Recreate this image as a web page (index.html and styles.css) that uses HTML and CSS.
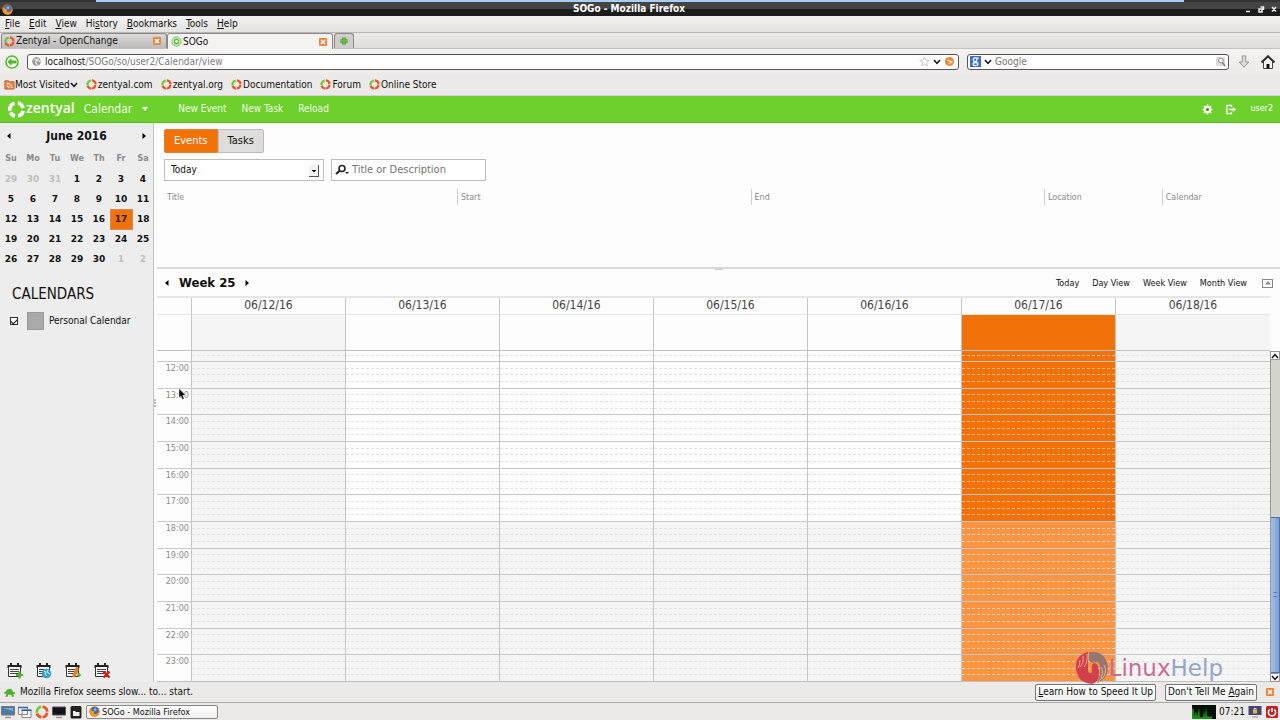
FILE: index.html
```
<!DOCTYPE html>
<html lang="en">
<head>
<meta charset="utf-8">
<title>SOGo - Mozilla Firefox</title>
<link rel="stylesheet" href="styles.css">
</head>
<body>
<svg class="defs" aria-hidden="true">
  <symbol id="ring" viewBox="0 0 12 12">
    <g fill="none" stroke-width="2.400"><path d="M1.600 6.600A4.400 4.400 0 0 1 5.200 1.700" stroke="#6fc92e"/><path d="M6.400 1.600A4.400 4.400 0 0 1 10.400 5.700M10.300 6.500A4.400 4.400 0 0 1 6.500 10.400M5.600 10.400A4.400 4.400 0 0 1 1.700 7.300" stroke="#e0592a"/></g>
  </symbol>
  <symbol id="close" viewBox="0 0 8 8">
    <rect width="8" height="8" rx="1" fill="#e8873c"/><path d="M2 2l4 4M6 2L2 6" stroke="#fff" stroke-width="1.500"/>
  </symbol>
  <symbol id="chev" viewBox="0 0 8 6"><path d="M1 1l3 3.400L7 1" fill="none" stroke="#111" stroke-width="1.500"/></symbol>
  <symbol id="firefox" viewBox="0 0 12 12">
    <circle cx="6" cy="6" r="5.600" fill="#e2641c"/><circle cx="6.400" cy="5" r="3.800" fill="#3b6fb5"/><path d="M1 3Q3 6 6 6Q4 8 7 9Q10 9 11.400 5Q12 10 7 11.600Q1 11.500 .6 6z" fill="#f09a2a"/><circle cx="6.600" cy="4" r="1.600" fill="#8db8e6"/>
  </symbol>
  <symbol id="cal" viewBox="0 0 16 16">
    <path d="M.5 2h14v3H.5z" fill="#222"/><path d="M4 0v3.500M11 0v3.500" stroke="#222" stroke-width="2"/><path d="M1.500 4v9.500h12V4" fill="#f8f8f8" stroke="#333"/><path d="M3 6.500h9M3 8.500h9M3 10.500h9" stroke="#444"/>
  </symbol>
</svg>

<header class="titlebar">
  <span class="strip"></span>
  <svg class="i11" viewBox="0 0 12 12"><use href="#firefox"/></svg>
  <h1>SOGo - Mozilla Firefox</h1>
  <svg class="winbtns" viewBox="0 0 32 8" fill="none" stroke="#eee" stroke-width="1.500"><path d="M1 6.500h4M14 4h3v3h-3zM15.500 2h3v3M27 2l4 4.500M31 2l-4 4.500"/></svg>
</header>

<nav class="menubar">
  <button><u>F</u>ile</button><button><u>E</u>dit</button><button><u>V</u>iew</button><button>Hi<u>s</u>tory</button><button><u>B</u>ookmarks</button><button><u>T</u>ools</button><button><u>H</u>elp</button>
</nav>

<div class="tabs">
  <div class="tab"><svg class="i11"><use href="#ring"/></svg><span>Zentyal - OpenChange</span><button aria-label="Close tab"><svg class="i8"><use href="#close"/></svg></button></div>
  <div class="tab active"><svg class="i11" viewBox="0 0 12 12" fill="none" stroke="#55c42c"><circle cx="6" cy="6" r="5"/><circle cx="6" cy="6" r="2.400" stroke-width="1.600"/></svg><span>SOGo</span><button aria-label="Close tab"><svg class="i8"><use href="#close"/></svg></button></div>
  <button class="newtab" aria-label="New tab"><svg class="i8" viewBox="0 0 8 8"><path d="M4 .5v7M.5 4h7" stroke="#3f9a2c" stroke-width="3.400"/><path d="M4 1v6M1 4h6" stroke="#66c244" stroke-width="1.800"/></svg></button>
</div>

<div class="navbar">
  <button class="back" aria-label="Back"><svg class="i14" viewBox="0 0 14 14"><circle cx="7" cy="7" r="6" fill="#fff" stroke="#53bd2c" stroke-width="1.600"/><path d="M2.500 7L6.500 3v2.500H11.500v3H6.500V11z" fill="#4cb828"/></svg></button>
  <div class="url" role="group" aria-label="Address">
    <svg class="i11" viewBox="0 0 12 12"><circle cx="6" cy="6" r="4.800" fill="#9b9b9b"/><path d="M3 3l3 1-1 3 2 3M8 2l-1 3 4 1" stroke="#e8e8e8" fill="none" stroke-width="1.300"/></svg>
    <span class="addr">localhost<i>/SOGo/so/user2/Calendar/view</i></span>
    <svg class="i11" viewBox="0 0 12 12"><path d="M6 1l1.400 3.500 3.800.2-3 2.400 1 3.800L6 8.800l-3.200 2.100 1-3.800-3-2.400 3.800-.2z" fill="#fff" stroke="#c5c5c5"/></svg>
    <svg class="chev"><use href="#chev"/></svg>
    <svg class="i11" viewBox="0 0 12 12"><circle cx="6" cy="6" r="5" fill="#e88a3c"/><path d="M3.600 4.500L8.400 6.500 5.500 8.500" stroke="#fbe3cc" stroke-width="1.500" fill="none"/></svg>
  </div>
  <div class="search">
    <svg class="i11" viewBox="0 0 12 12"><rect width="12" height="12" fill="#3b6fd0"/><g fill="none" stroke="#fff" stroke-width="1.400"><circle cx="5.600" cy="4" r="2"/><ellipse cx="6" cy="8.800" rx="2.600" ry="1.700"/><path d="M7 2.300h2.500M7 5.500L6 7"/></g></svg>
    <svg class="chev"><use href="#chev"/></svg>
    <input aria-label="Search" placeholder="Google">
    <svg class="i11" viewBox="0 0 12 12"><rect x="1" y="1" width="10" height="10" fill="#ddd"/><circle cx="6.500" cy="5" r="2.600" fill="#f4f4f4" stroke="#888"/><path d="M8 7l3 4" stroke="#777" stroke-width="1.500"/></svg>
  </div>
  <svg class="i14" viewBox="0 0 14 16"><path d="M5 1h4v7h3.500L7 14 1.500 8H5z" fill="#ddd" stroke="#888"/></svg>
  <svg class="i14 home" viewBox="0 0 14 14"><path d="M2.500 6v7.500h9V6L7 2z" fill="#f4f4f4" stroke="#444"/><path d="M.5 7.500L7 1.200l6.500 6.300" fill="none" stroke="#3a302c" stroke-width="2"/><path d="M5.500 9h3v4.500h-3z" fill="#111"/></svg>
</div>

<div class="bookmarks">
  <a href="#" class="mv"><svg class="i11" viewBox="0 0 12 12"><path d="M1 2h4l1 1h5v8H1z" fill="#e28a50" stroke="#bd5a22"/><path d="M3 5q4-1 6 5M3 7.500q2 0 3 2.500" stroke="#fff" fill="none"/></svg>Most Visited<svg class="chev"><use href="#chev"/></svg></a>
  <a href="#"><svg class="i11"><use href="#ring"/></svg>zentyal.com</a>
  <a href="#"><svg class="i11"><use href="#ring"/></svg>zentyal.org</a>
  <a href="#"><svg class="i11"><use href="#ring"/></svg>Documentation</a>
  <a href="#"><svg class="i11"><use href="#ring"/></svg>Forum</a>
  <a href="#"><svg class="i11"><use href="#ring"/></svg>Online Store</a>
</div>

<div class="appbar">
  <svg class="logo" viewBox="0 0 20 20" fill="none" stroke="#fff" stroke-width="3.800"><path d="M2.900 11.500A7 7 0 0 1 8 3.300M11.500 3.200A7 7 0 0 1 16.900 8.500M17 11.500A7 7 0 0 1 11.700 16.800M8.400 16.800A7 7 0 0 1 3.700 13"/></svg>
  <b>zentyal</b>
  <button class="module">Calendar<svg viewBox="0 0 8 4"><path d="M1 0h6L4 4z" fill="#fff"/></svg></button>
  <button>New Event</button><button>New Task</button><button>Reload</button>
  <span class="grow"></span>
  <button class="ico" aria-label="Preferences"><svg class="i11" viewBox="0 0 12 12"><path d="M6 .5v11M.5 6h11M2.200 2.200l7.600 7.600M9.800 2.200l-7.600 7.600" stroke="#fff" stroke-width="1.900"/><circle cx="6" cy="6" r="2.700" fill="#3d8a18" stroke="#fff" stroke-width="2"/></svg></button>
  <button class="ico" aria-label="Log off"><svg class="i11" viewBox="0 0 12 12" fill="none" stroke="#fff" stroke-width="1.600"><path d="M7 3V1.500H2v9h5V9M4.500 6H9"/><path d="M8.500 3.200L12 6l-3.500 2.800z" fill="#fff" stroke="none"/></svg></button>
  <span class="user">user2</span>
</div>

<div class="app">
  <aside>
    <div class="mhead"><button aria-label="Previous month"><svg class="arr" viewBox="0 0 4 6"><path d="M3.500 0v6L0 3z"/></svg></button><b>June 2016</b><button aria-label="Next month"><svg class="arr" viewBox="0 0 4 6"><path d="M.5 0v6L4 3z"/></svg></button></div>
    <table class="mini">
      <thead><tr><th>Su</th><th>Mo</th><th>Tu</th><th>We</th><th>Th</th><th>Fr</th><th>Sa</th></tr></thead>
      <tbody>
      <tr><td class="off">29</td><td class="off">30</td><td class="off">31</td><td>1</td><td>2</td><td>3</td><td>4</td></tr>
      <tr><td>5</td><td>6</td><td>7</td><td>8</td><td>9</td><td>10</td><td>11</td></tr>
      <tr><td>12</td><td>13</td><td>14</td><td>15</td><td>16</td><td class="now">17</td><td>18</td></tr>
      <tr><td>19</td><td>20</td><td>21</td><td>22</td><td>23</td><td>24</td><td>25</td></tr>
      <tr><td>26</td><td>27</td><td>28</td><td>29</td><td>30</td><td class="off">1</td><td class="off">2</td></tr>
      </tbody>
    </table>
    <h2>CALENDARS</h2>
    <label class="cal"><input type="checkbox" checked><span class="swatch"></span>Personal Calendar</label>
    <div class="tools">
      <button aria-label="New calendar"><svg viewBox="0 0 16 16"><use href="#cal"/><path d="M12.500 8.500v7M9 12h7" stroke="#4fb52a" stroke-width="2.200"/></svg></button>
      <button aria-label="Web calendar"><svg viewBox="0 0 16 16"><use href="#cal"/><circle cx="10.500" cy="10.500" r="4.800" fill="#3d9fd0"/><path d="M8 8l2 1-1 2 2 2M12 7l-1 2 3 2" stroke="#d6eefa" fill="none"/></svg></button>
      <button aria-label="Subscribe"><svg viewBox="0 0 16 16"><use href="#cal"/><path d="M11 4q4 0 2 5l-3 5q-4 1-2-3z" fill="#ee7a1c"/><path d="M14 10v4M12 12h4" stroke="#4fb52a" stroke-width="1.500"/></svg></button>
      <button aria-label="Remove calendar"><svg viewBox="0 0 16 16"><use href="#cal"/><path d="M9.500 8.500l6 6M15.500 8.500l-6 6" stroke="#cc2218" stroke-width="2.400"/></svg></button>
    </div>
  </aside>
  <div class="vsplit"><span></span></div>
  <main>
    <section class="events">
      <div class="seg"><button class="on">Events</button><button>Tasks</button></div>
      <div class="filters">
        <div class="pick"><select aria-label="Period"><option>Today</option></select></div>
        <div class="find"><svg viewBox="0 0 14 12" fill="none" stroke="#222"><circle cx="7" cy="4.500" r="3" stroke-width="1.600"/><path d="M5 6.500L1 10" stroke-width="2.200"/><path d="M10 8h4l-2 2z" fill="#222" stroke="none"/></svg><input aria-label="Search events" placeholder="Title or Description"></div>
      </div>
      <table class="list"><colgroup><col class="wide"><col class="wide"><col class="wide"><col><col></colgroup>
        <thead><tr><th>Title</th><th>Start</th><th>End</th><th>Location</th><th>Calendar</th></tr></thead></table>
    </section>
    <div class="hsplit"><span></span></div>
    <section class="week">
      <div class="whead">
        <button aria-label="Previous week"><svg class="arr" viewBox="0 0 4 6"><path d="M3.500 0v6L0 3z"/></svg></button><b>Week 25</b><button aria-label="Next week"><svg class="arr" viewBox="0 0 4 6"><path d="M.5 0v6L4 3z"/></svg></button>
        <span class="grow"></span>
        <a href="#">Today</a><a href="#">Day View</a><a href="#">Week View</a><a href="#">Month View</a>
        <button class="fold" aria-label="Collapse"><svg viewBox="0 0 6 4"><path d="M0 3.500L3 0l3 3.500z" fill="#888"/></svg></button>
      </div>
      <div class="row dates"><span></span><span>06/12/16</span><span>06/13/16</span><span>06/14/16</span><span>06/15/16</span><span>06/16/16</span><span>06/17/16</span><span>06/18/16</span></div>
      <div class="row allday"><span></span><span class="we"></span><span></span><span></span><span></span><span></span><span class="today"></span><span class="we"></span></div>
      <div class="scroll">
        <div class="hours" id="hours"></div>
        <div class="bar"><span class="sb"><svg class="chev"><use href="#chev"/></svg></span><span class="track"></span><span class="thumb"><i></i></span><span class="sb"><svg class="chev"><use href="#chev"/></svg></span></div>
      </div>
    </section>
  </main>
</div>

<div class="notice">
  <svg class="i11" viewBox="0 0 12 12"><path d="M0 6.500q0-1.500 2-1.500 1-3 4-3t4 3.500l2 .5v1.500H10l1 3H8.500L8 8.500H4.500L4 10.500H1.500L2.500 8z" fill="#4fb02c"/></svg>
  <span>Mozilla Firefox seems slow... to... start.</span><span class="grow"></span>
  <button><u>L</u>earn How to Speed It Up</button><button>Don't Tell Me <u>A</u>gain</button>
  <button class="x" aria-label="Dismiss"><svg class="i8"><use href="#close"/></svg></button>
</div>

<footer>
  <svg class="i14" viewBox="0 0 14 14"><path d="M.5 1.500h13v8.500H.5z" fill="#4d79a8" stroke="#777"/><path d="M2 3h10v3z" fill="#86a8cc"/><path d="M4 12.500h6" stroke="#999" stroke-width="1.500"/></svg>
  <svg class="i14" viewBox="0 0 14 14"><path d="M.5 2.500h9v7h-9zM4 5h9v7.500H4z" fill="#f4f4f4" stroke="#888"/><path d="M0 2.500h10M3.500 5.200h10" stroke="#3465a4" stroke-width="1.600"/></svg>
  <svg class="i14"><use href="#ring"/></svg>
  <svg class="i14" viewBox="0 0 14 14"><path d="M.5 2h13v8H.5z" fill="#101418" stroke="#555"/><path d="M4 12.500h6" stroke="#999" stroke-width="1.500"/></svg>
  <svg class="i14" viewBox="0 0 14 14"><rect x="1.500" y="1" width="11" height="12.500" rx="1.500" fill="#222"/><path d="M4 6h2l1 1h3.500v4H4z" fill="#eee"/></svg>
  <button class="task"><svg class="i11" viewBox="0 0 12 12"><use href="#firefox"/></svg>SOGo - Mozilla Firefox</button>
  <span class="grow"></span>
  <svg class="cpu" viewBox="0 0 24 14"><rect width="24" height="14" fill="#031003"/><path d="M0 14V2l1 3 1-1v8l2-6 1 6 2-9 1 9h3l1-7 1 7 1-10 1 9 3 1 2-1V14z" fill="#1c8a1c"/></svg>
  <time>07:21</time>
  <svg class="i14" viewBox="0 0 14 14"><rect x=".5" y="1" width="13" height="9" fill="#47476e"/><path d="M5 5h4v3.500H5z" fill="#e3b93c"/><path d="M6 5V3.500h2V5" fill="none" stroke="#ddd"/><path d="M4 12h6" stroke="#aaa" stroke-width="1.500"/></svg>
  <svg class="i14" viewBox="0 0 14 14"><rect x="1" y="1" width="12" height="12" rx="1.500" fill="#c32222"/><path d="M4.800 4.500a3.600 3.600 0 1 0 4.400 0M7 3v4" stroke="#fff" stroke-width="1.500" fill="none"/></svg>
</footer>

<div class="mark"><svg viewBox="0 0 34 34"><g opacity=".85"><path d="M13 1Q0 4 1 18 3 32 17 33q7-2 7-10 0-11-5-11-3 1-2 9-2 3-4-1z" fill="#c8324c"/><path d="M14 1v9l4 2q6-3 7 4 1 9-3 16 11-4 11-16Q31 2 19 1z" fill="#86717a"/><path d="M12 3q1 8-3 13M8 5q1 7-3 11M5 9q0 5-2 8" stroke="#f0a6a0" fill="none"/><path d="M26 16q4 6-2 15M29 14q4 7-2 14" stroke="#ddb8a0" fill="none"/></g></svg><span>Linux</span><span class="help">Help</span></div>
<svg class="cursor" viewBox="0 0 8 12"><path d="M1 .5v9l2-1.600 1.500 3.600 1.600-.8L4.600 7.300l2.700-.3z" fill="#000" stroke="#fff" stroke-width=".4"/></svg>
<script src="script.js"></script>
</body>
</html>
```
FILE: script.js
```
const hours = document.getElementById('hours');

function addRow(label, extra, evening) {
  const row = document.createElement('div');
  row.className = 'row hour' + extra;
  const time = document.createElement('span');
  time.className = 'time';
  time.textContent = label;
  row.append(time);
  for (let day = 0; day < 7; day++) {
    const cell = document.createElement('span');
    const weekend = day === 0 || day === 6;
    cell.className = 'cell' + (day === 5 ? ' today' : '') + (weekend ? ' we' : '') + (evening ? ' eve' : '');
    for (let q = 0; q < 4; q++) cell.append(document.createElement('i'));
    row.append(cell);
  }
  hours.append(row);
}

addRow('', ' partial', false);
for (let h = 12; h < 24; h++) addRow(h + ':00', '', h >= 18);
```
FILE: styles.css
```
* { box-sizing: border-box; }
body { margin: 0; min-height: 100vh; display: flex; flex-direction: column; background: #eceae9; color: #111; font: 10px/14px "DejaVu Sans Condensed", "DejaVu Sans", sans-serif; }
button, input, select { font: inherit; color: inherit; margin: 0; padding: 0; border: 0; background: none; }
a { color: inherit; text-decoration: none; }
u { text-underline-offset: 1px; }
svg { display: block; flex: none; }
.defs { position: absolute; width: 0; height: 0; }
.grow { flex: 1; }
.i8 { width: 8px; height: 8px; }
.i11 { width: 11px; height: 11px; }
.i14 { width: 14px; height: 14px; }
.chev { width: 8px; height: 6px; }
.arr { width: 4px; height: 6px; }

.titlebar { position: relative; height: 16px; display: flex; align-items: center; padding: 0 3px 0 2px; background: linear-gradient(#444 50%, #1c1c1c 50%); border-top: 2px solid #333; color: #fff; }
.strip { position: absolute; top: -2px; left: 96px; right: 96px; height: 2px; background: #a9cdf5; }
.titlebar h1 { flex: 1; margin: 0; padding-bottom: 1px; text-align: center; font-size: 10px; line-height: 12px; }
.winbtns { width: 32px; height: 8px; }

.menubar { height: 17px; display: flex; align-items: center; gap: 9px; padding-left: 5px; background: linear-gradient(#f3f2f1, #e5e3e1); border-bottom: 1px solid #b8b6b4; }
.tabs { height: 16px; display: flex; background: linear-gradient(#ebe9e7, #e0deda); border-bottom: 1px solid #c4c2c0; }
.tab { width: 166px; display: flex; align-items: center; gap: 1px; padding: 0 5px 0 2px; margin-left: 1px; background: linear-gradient(#dcdad8, #bdbbb9); border: 1px solid #8b8987; border-bottom: 0; border-radius: 3px 3px 0 0; }
.tab span { flex: 1; }
.tab.active { margin: 0 0 -1px; padding-left: 3px; background: #f4f3f2; }
.newtab { width: 20px; margin-left: 1px; display: grid; place-items: center; background: #cfcdcb; border: 1px solid #8b8987; border-bottom: 0; border-radius: 3px 3px 0 0; }

.navbar { height: 25px; display: flex; align-items: center; gap: 8px; padding: 0 5px; background: linear-gradient(#f4f3f2, #ecebe9); }
.navbar .home { margin-left: 2px; }
.url, .search { height: 16px; display: flex; align-items: center; gap: 3px; padding: 0 3px; background: #fff; border: 1px solid #5d5257; border-radius: 3px; }
.url { flex: 1; }
.addr { flex: 1; }
.addr i { font-style: normal; color: #7c7c7c; }
.search { width: 262px; padding: 0 2px; }
.search input { flex: 1; min-width: 0; }
input::placeholder { color: #757575; opacity: 1; }
.bookmarks { height: 22px; display: flex; align-items: center; gap: 8px; padding: 0 4px; border-bottom: 1px solid #d9cde0; }
.bookmarks a { display: flex; align-items: center; gap: 1px; }
.bookmarks .mv { gap: 0; }

.appbar { height: 27px; display: flex; align-items: center; padding: 0 7px; background: #6dd02c; border-bottom: 1px solid #5cb824; color: #fff; }
.appbar .logo { width: 19px; height: 19px; }
.appbar b { font: 600 14px/18px "Open Sans", "DejaVu Sans", sans-serif; padding-bottom: 2px; margin-right: 9px; }
.appbar button { margin-right: 15px; color: #f1fbe8; }
.appbar .module { display: flex; align-items: center; gap: 9px; margin-right: 29px; font-size: 12px; }
.appbar .ico { margin-right: 12px; }
.module svg { width: 8px; height: 4px; }
.user { font-size: 8px; font-family: "DejaVu Sans", sans-serif; margin-left: 2px; }

.app { flex: 1; display: flex; min-height: 0; }
aside { width: 154px; display: flex; flex-direction: column; background: #ededed; border-right: 1px solid #c4c4c4; }
.mhead { height: 25px; display: flex; align-items: center; justify-content: space-between; padding: 0 7px; font-size: 12px; }
.mini { width: 154px; table-layout: fixed; border-collapse: collapse; text-align: center; font-weight: bold; font-family: "DejaVu Sans", sans-serif; }
.mini th { height: 21px; padding: 0; font-size: 8px; color: #8a8a8a; }
.mini td { height: 20px; padding: 0; font-size: 9px; line-height: 18px; }
.mini .off { color: #bdbdbd; }
.mini .now { background: #f17208; border: 1px solid #d98a50; color: #2c2430; }
aside h2 { margin: 17px 0 0 12px; font-size: 15px; line-height: 16px; font-weight: normal; }
.cal { display: flex; align-items: center; margin: 10px 0 0 10px; }
.cal input { appearance: none; width: 8px; height: 8px; border: 1px solid #333; background: #fff; display: grid; place-items: center; }
.cal input:checked::after { content: ""; width: 5px; height: 3px; border: solid #111; border-width: 0 0 1px 1px; rotate: -45deg; }
.swatch { width: 17px; height: 18px; margin: 0 5px 0 9px; background: #aaa; border: 1px solid #999; }
.tools { margin-top: auto; display: flex; gap: 13px; padding: 0 0 3px 7px; }
.tools svg { width: 16px; height: 16px; }

.vsplit { width: 3px; display: flex; align-items: center; background: #fdfdfd; }
.vsplit span { width: 2px; height: 8px; border-left: 2px dotted #bbb; }
main { flex: 1; min-width: 0; display: flex; flex-direction: column; background: #fdfdfd; }
.events { height: 144px; padding: 6px 0 0 7px; }
.seg { display: flex; font-size: 11px; }
.seg button { height: 24px; padding: 0 9px; background: #dfddda; border: 1px solid #bcbcbc; border-radius: 0 2px 2px 0; }
.seg .on { background: #f17208; border-color: #e88030; border-radius: 2px 0 0 2px; color: #fff; }
.filters { display: flex; gap: 7px; margin-top: 6px; }
.pick, .find { position: relative; height: 22px; display: flex; align-items: center; border: 1px solid #bdbdbd; background: #fff; }
.pick { width: 160px; }
.pick select { appearance: none; flex: 1; height: 20px; padding-left: 6px; }
.pick::after { content: ""; position: absolute; right: 4px; top: 5px; width: 9px; height: 11px; border: solid #555; border-width: 0 1px 1px 0; background: linear-gradient(#111, #111) 3px 5px / 4px 1px no-repeat, linear-gradient(#111, #111) 4px 6px / 2px 1px no-repeat, #f2f2f2; pointer-events: none; }
.find { width: 155px; padding-left: 3px; gap: 3px; font-size: 11px; }
.find svg { width: 14px; height: 12px; }
.find input { flex: 1; min-width: 0; }
.list { width: 100%; margin-top: 8px; table-layout: fixed; border-collapse: collapse; color: #8a8a8a; }
.list th { height: 16px; padding: 2px 0 0 3px; border-left: 1px solid #d0d0d0; text-align: left; font: 8px/12px "DejaVu Sans", sans-serif; }
.list th:first-child { border: 0; }
.list .wide { width: 26.3%; }
.hsplit { height: 3px; border-top: 2px solid #d8d8d8; display: flex; justify-content: center; }
.hsplit span { width: 8px; height: 1px; background: #ccc; }

.week { flex: 1; display: flex; flex-direction: column; }
.whead { height: 26px; display: flex; align-items: center; gap: 10px; padding: 0 7px 0 8px; }
.whead b { font-size: 13px; }
.whead a { margin-left: 3px; font-size: 9px; }
.fold { width: 11px; height: 9px; margin-left: 5px; border: 1px solid #888; display: grid; place-items: center; }
.fold svg { width: 6px; height: 4px; }
.row { display: grid; grid-template-columns: 35px repeat(7, 1fr); }
.row > span { border-right: 1px solid #c6c6c6; }
.row > span:last-child { border-right: 0; }
.dates, .allday { margin-right: 10px; }
.dates { height: 18px; border-top: 2px solid #e6e6e6; text-align: center; font-size: 12px; line-height: 15px; color: #444; }
.allday { height: 37px; border-bottom: 1px solid #c0c0c0; }
.allday > span { border-top: 1px solid #e4e4e4; }
.we { background: #f5f5f5; }
.scroll { flex: 1; display: flex; }
.hours { flex: 1; display: flex; flex-direction: column; border-bottom: 1px solid #c0c0c0; }
.hour { flex: 1; border-bottom: 1px solid #c8c8c8; }
.hour:last-child { border-bottom: 0; }
.hour.partial { flex: 0 0 11px; }
.time { padding-right: 2px; text-align: right; color: #8c8c8c; font: 9px/13px "DejaVu Sans Condensed", sans-serif; }
.cell { display: flex; flex-direction: column; overflow: hidden; }
.cell i { flex: 1; border-bottom: 1px dashed #e2e2e2; }
.cell i:last-child { border: 0; }
.partial i { display: none; }
.partial i:first-child { display: block; flex: 0 0 5px; }
.eve { background: #f5f5f5; }
.today { background: #f17208; }
.today i { border-color: #f9b680; }
.today.eve { background: #f99545; }
.today.eve i { border-color: #fcd3ae; }
.bar { width: 10px; display: flex; flex-direction: column; border-left: 1px solid #999; background: #d4d3d0; }
.sb { height: 9px; background: #fafafa; border: 1px solid #999; border-left: 0; display: grid; place-items: center; }
.sb:first-child svg { rotate: 180deg; }
.track { flex: 157; }
.thumb { flex: 155; display: grid; place-items: center; background: linear-gradient(90deg, #a3c0ea, #7d9fd4); border: 1px solid #4a6fae; border-left: 0; }
.thumb i { width: 4px; height: 5px; border: solid #5f82b8; border-width: 1px 0; }

.notice { height: 21px; display: flex; align-items: center; gap: 5px; padding: 0 6px 0 4px; border-bottom: 1px solid #aaa; }
.notice button { height: 17px; padding: 0 2px; border: 1px solid #777; border-radius: 2px; background: linear-gradient(#fff, #f0f0f0); }
.notice button + button { margin-left: 4px; }
.notice .x { border: 0; padding: 0; background: none; height: 8px; }
footer { height: 17px; display: flex; align-items: center; gap: 3px; padding: 0 1px; }
.task { width: 132px; height: 14px; display: flex; align-items: center; gap: 2px; padding-left: 2px; border: 1px solid #888; border-radius: 2px; background: linear-gradient(#fff, #eee); font-size: 9px; }
.cpu { width: 24px; height: 14px; }

.mark { position: absolute; right: 57px; bottom: 35px; display: flex; align-items: center; font: 23px/26px "DejaVu Sans", sans-serif; color: #c96c96; }
.mark svg { width: 34px; height: 34px; }
.mark .help { color: #93a6c6; }
.cursor { position: absolute; left: 178px; top: 388px; width: 8px; height: 12px; }
```
